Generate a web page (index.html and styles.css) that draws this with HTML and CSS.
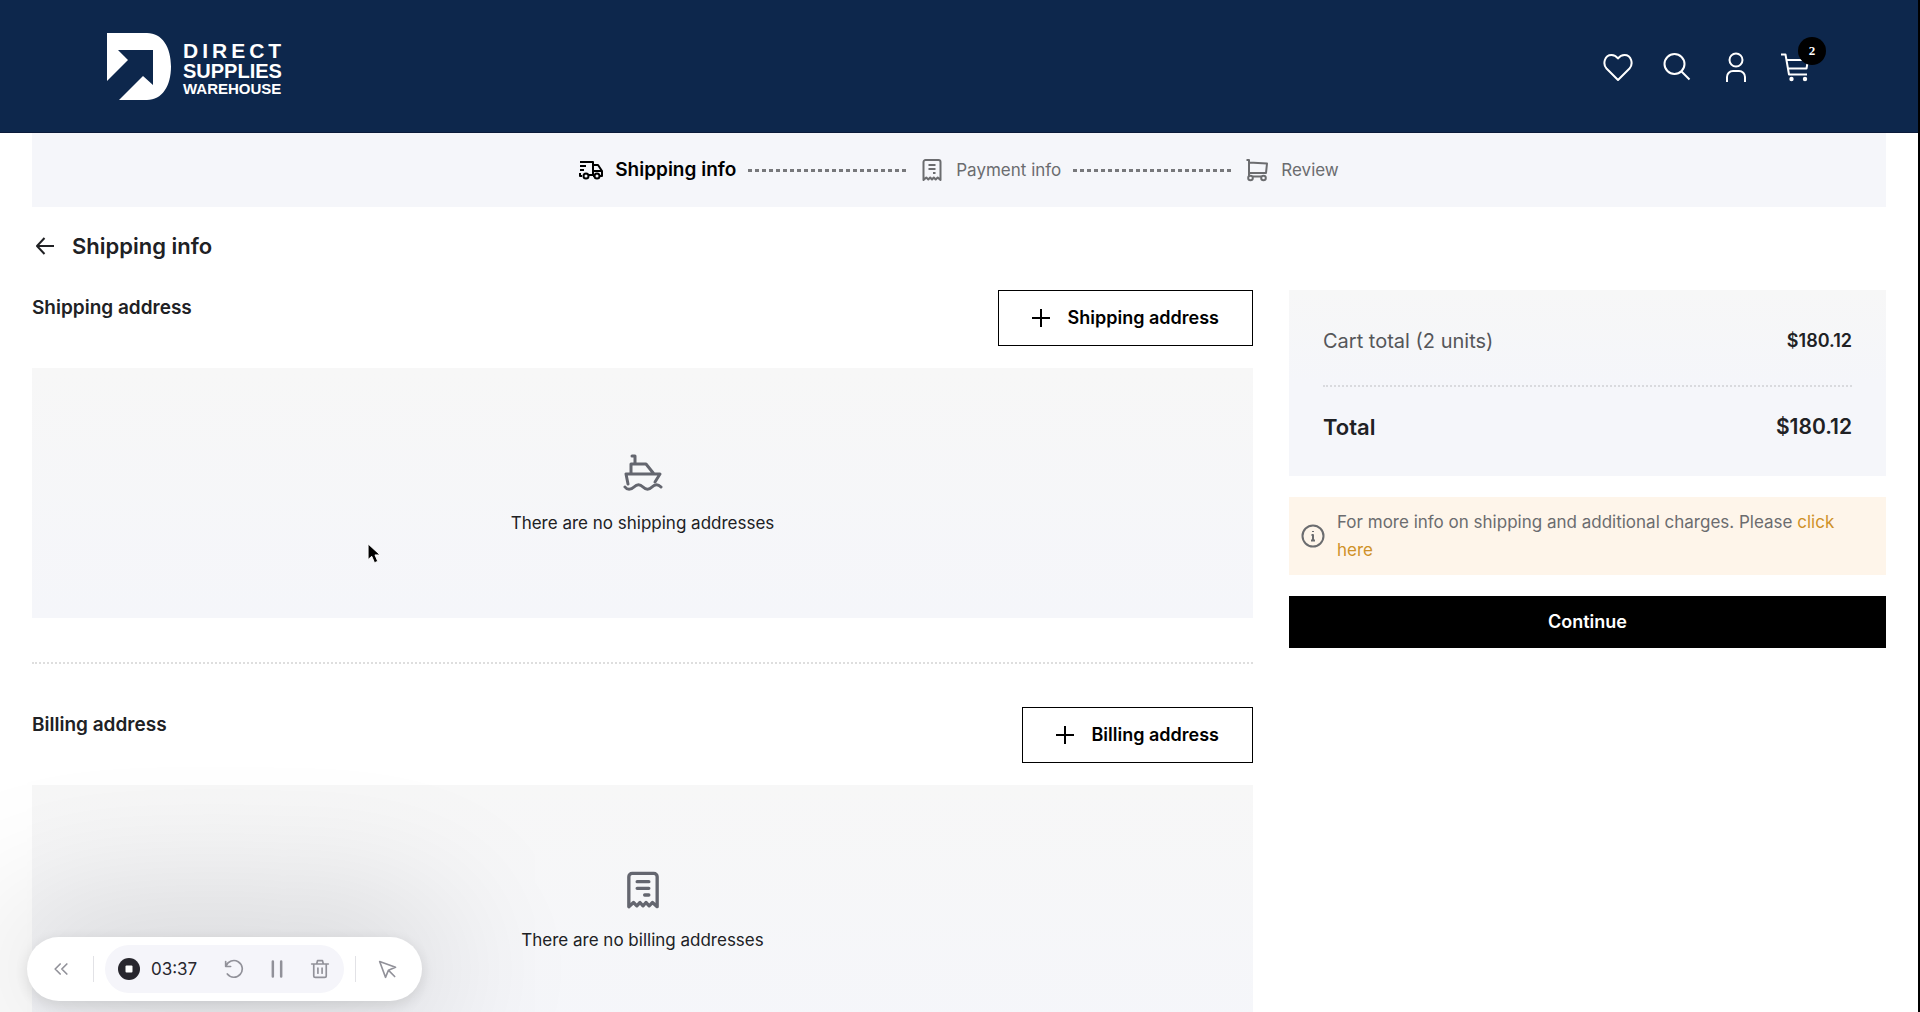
FILE: index.html
```html
<!doctype html>
<html lang="en">
<head>
<meta charset="utf-8">
<meta name="viewport" content="width=device-width, initial-scale=1">
<title>Shipping info - Direct Supplies Warehouse</title>
<link rel="stylesheet" href="styles.css">
</head>
<body>

<!-- shared icons -->
<svg class="sprite" aria-hidden="true">
	<symbol id="receipt" viewBox="0 0 24 24">
		<path d="M3.500 22V4a2 2 0 0 1 2-2h13a2 2 0 0 1 2 2v18l-2.800-2.500-2 2-1.900-2-1.800 2-1.800-2-1.900 2-2-2z"/>
		<path d="M8.500 7h7M8.500 11h7M13 15h2.500"/>
	</symbol>
	<symbol id="plus" viewBox="0 0 20 20">
		<path d="M10 1v18M1 10h18"/>
	</symbol>
</svg>

<header class="header">
	<a href="#" class="logo" aria-label="Direct Supplies Warehouse">
		<svg class="logo-mark" viewBox="0 0 64 67"><path d="M0 0H40C55 0 64 14 64 33.500S55 67 40 67H12L36 43 46 52V17H11L21 27 0 48Z"/></svg>
		<span class="logo-text">
			<span class="logo-direct">DIRECT</span>
			<span class="logo-supplies">SUPPLIES</span>
			<span class="logo-warehouse">WAREHOUSE</span>
		</span>
	</a>
	<nav class="header-nav">
		<a href="#" aria-label="Wishlist"><svg viewBox="0 0 30 30"><path d="M15 28L3.500 16.500C-.5 12 1.500 3 8.500 3c3 0 5 1.500 6.500 3.500C16.500 4.500 18.500 3 21.500 3c7 0 9 9 5 13.500z"/></svg></a>
		<a href="#" aria-label="Search"><svg viewBox="0 0 30 30"><circle cx="12.500" cy="12" r="10"/><path d="M19.500 19.500l8 8"/></svg></a>
		<a href="#" aria-label="Account"><svg viewBox="0 0 30 30"><circle cx="15" cy="8" r="6.500"/><path d="M6 30v-5a6 6 0 0 1 6-6h6a6 6 0 0 1 6 6v5"/></svg></a>
		<a href="#" class="cart" aria-label="Cart"><svg viewBox="0 0 30 30"><path d="M1 2.500h4.500L9 22.500h18M6.500 8H28l-1.500 8.500H8"/><circle class="dot" cx="11.500" cy="27" r="2.200"/><circle class="dot" cx="25" cy="27" r="2.200"/></svg><span class="badge">2</span></a>
	</nav>
</header>

<main class="page">
	<ol class="steps">
		<li class="step active">
			<svg viewBox="0 0 24 24"><path d="M1 4h13v13H10M14 7h5l4 6v5h-2M16 18h-2M14 13h9M1 8h6M1 12h4M1 15v3h2"/><circle cx="7" cy="18" r="2.500"/><circle cx="18" cy="18" r="2.500"/></svg>
			<span>Shipping info</span>
		</li>
		<li class="step-line"></li>
		<li class="step">
			<svg viewBox="0 0 24 24"><use href="#receipt"/></svg>
			<span>Payment info</span>
		</li>
		<li class="step-line"></li>
		<li class="step">
			<svg viewBox="0 0 24 24"><path d="M1.500 2H4v16M4 4.500l18 1-1 9.500H4"/><circle cx="5.500" cy="20" r="2.300"/><circle cx="18.500" cy="20" r="2.300"/><path d="M8 18.500h8"/></svg>
			<span>Review</span>
		</li>
	</ol>

	<div class="title">
		<a href="#" aria-label="Back"><svg viewBox="0 0 20 20"><path d="M19 10H2M9.500 2L2 10l7.500 8"/></svg></a>
		<h1>Shipping info</h1>
	</div>

	<div class="columns">
		<div class="addresses">
			<section>
				<div class="section-head">
					<h2>Shipping address</h2>
					<button type="button" class="btn-outline"><svg><use href="#plus"/></svg>Shipping address</button>
				</div>
				<div class="empty">
					<svg viewBox="0 0 40 40"><path d="M9 3h3v8M8 21V11h15l8 10M5 31L3 21h34l-5 8"/><path d="M2 34c2 3 6 3 9 0s6-3 9 0 6 3 9 0 6-3 9 0"/></svg>
					<p>There are no shipping addresses</p>
				</div>
			</section>
			<hr>
			<section>
				<div class="section-head">
					<h2>Billing address</h2>
					<button type="button" class="btn-outline"><svg><use href="#plus"/></svg>Billing address</button>
				</div>
				<div class="empty">
					<svg viewBox="0 0 24 24" class="thin"><use href="#receipt"/></svg>
					<p>There are no billing addresses</p>
				</div>
			</section>
		</div>

		<aside class="side">
			<dl class="summary">
				<div class="row"><dt>Cart total (2 units)</dt><dd>$180.12</dd></div>
				<div class="row total"><dt>Total</dt><dd>$180.12</dd></div>
			</dl>
			<div class="notice">
				<svg viewBox="0 0 24 24"><circle cx="12" cy="12" r="10.500"/><path d="M10.500 11H12v5.500M10 16.500h4M12 7v1"/></svg>
				<p>For more info on shipping and additional charges. Please <a href="#">click here</a></p>
			</div>
			<button type="button" class="btn-continue">Continue</button>
		</aside>
	</div>
</main>

<!-- recorder bar -->
<div class="recorder">
	<button type="button" aria-label="Collapse"><svg viewBox="0 0 24 24"><path d="M11 6l-6 6 6 6M19 6l-6 6 6 6"/></svg></button>
	<div class="controls">
		<button type="button" class="stop" aria-label="Stop"><svg viewBox="0 0 22 22"><circle cx="11" cy="11" r="11"/><rect x="7.500" y="7.500" width="7" height="7" rx="1"/></svg></button>
		<span class="time">03:37</span>
		<button type="button" aria-label="Restart"><svg viewBox="0 0 24 24"><path d="M2 3v6h6M2.500 8.500A10 10 0 1 1 4 18"/></svg></button>
		<button type="button" aria-label="Pause"><svg viewBox="0 0 24 24" class="bold"><path d="M7 3v18M17 3v18"/></svg></button>
		<button type="button" aria-label="Delete"><svg viewBox="0 0 24 24"><path d="M2 6h20M8 6l1-4h6l1 4M4.500 6v14a2 2 0 0 0 2 2h11a2 2 0 0 0 2-2V6M9.500 11v6M14.500 11v6"/></svg></button>
	</div>
	<button type="button" aria-label="Pointer"><svg viewBox="0 0 24 24"><path d="M2 3l7 19 3.500-8.500L21 10zM13 14l7 7"/></svg></button>
</div>
<svg class="pointer" viewBox="0 0 16 24" aria-hidden="true"><path d="M1 1v17l4-3.500 3 7 3.500-1.500-3-7H14z"/></svg>

</body>
</html>
```

FILE: styles.css
```css
* {padding:0;margin:0;box-sizing:border-box;}
body{
	font-family:Inter,"Liberation Sans",sans-serif;
	font-size:17px;
	line-height:28px;
	color:#202124;
	background:#fff;
	border-right:2px solid #000;
}
a{color:inherit;text-decoration:none;}
button{font:inherit;color:inherit;border:none;background:none;cursor:pointer;}
svg{display:block;fill:none;stroke:currentColor;stroke-width:2;stroke-linejoin:round;flex:none;}
.sprite{position:absolute;width:0;height:0;}

/* header */
.header{
	display:flex;
	align-items:center;
	justify-content:space-between;
	height:133px;
	padding:0 108px 0 107px;
	background:#0d274c;
	border-bottom:1px solid #0a1a3a;
	color:#fff;
}
.logo{display:flex;align-items:center;gap:12px;}
.logo-mark{width:64px;height:67px;fill:#fff;stroke:none;}
.logo-text{
	display:flex;
	flex-direction:column;
	padding-top:6px;
	font-family:"Liberation Sans",Arial,sans-serif;
	font-weight:bold;
	line-height:20px;
}
.logo-direct{font-size:21px;letter-spacing:4px;}
.logo-supplies{font-size:20px;}
.logo-warehouse{font-size:15px;line-height:16px;}
.header-nav{display:flex;gap:29px;padding-top:2px;}
.header-nav svg{width:30px;height:30px;}
.cart{position:relative;}
.cart .dot{fill:#fff;stroke:none;}
.badge{
	position:absolute;
	top:-15px;
	left:18px;
	width:28px;
	height:28px;
	border-radius:50%;
	background:#000;
	font:bold 13px/28px "Liberation Serif",serif;
	text-align:center;
}

/* checkout steps */
.page{padding:0 32px;}
.steps{
	display:flex;
	align-items:center;
	justify-content:center;
	gap:12px;
	height:74px;
	background:#f5f6fa;
	list-style:none;
}
.step{display:flex;align-items:center;gap:12px;color:#6b6c6f;}
.step svg{width:24px;height:24px;}
.step.active{color:#000;font-size:19px;font-weight:600;}
.step-line{
	width:160px;
	height:3px;
	background:repeating-linear-gradient(to right,#77787b 0 4px,transparent 4px 7px);
}

.title{display:flex;align-items:center;gap:16px;padding:25px 2px 30px;}
.title svg{width:22px;height:20px;}
h1{font-size:22px;font-weight:600;line-height:28px;}
h2{font-size:19px;font-weight:600;line-height:36px;}

.columns{display:grid;grid-template-columns:minmax(0,1221fr) minmax(0,597fr);gap:36px;align-items:start;}
.section-head{display:flex;justify-content:space-between;align-items:flex-start;margin-bottom:22px;}
.btn-outline{
	display:flex;
	align-items:center;
	gap:17px;
	height:56px;
	padding:0 33px 0 32px;
	border:1px solid #000;
	color:#000;
	font-size:18px;
	font-weight:600;
}
.btn-outline svg{width:20px;height:20px;}
.empty{
	display:flex;
	flex-direction:column;
	align-items:center;
	justify-content:center;
	gap:16px;
	height:250px;
	padding-top:4px;
	background:linear-gradient(#f7f7f7,#f5f6fa);
}
.empty svg{width:40px;height:40px;color:#64666f;stroke-width:3;stroke-linecap:round;}
.empty svg.thin{stroke-width:2;}
hr{border:none;border-top:2px dotted #dedede;margin:44px 0 43px;}

/* order summary */
.side{display:flex;flex-direction:column;gap:21px;}
.summary{padding:0 34px;background:linear-gradient(#f7f7f7,#f5f6fa 50%);}
.row{display:flex;justify-content:space-between;padding:37px 0 30px;font-size:20px;color:#55565a;}
.row dd{font-size:18px;font-weight:600;color:#202124;}
.row.total{padding:26px 0 35px;border-top:2px dotted #d9dade;color:#202124;font-weight:600;font-size:22px;}
.total dd{font-size:21px;}
.notice{
	display:flex;
	align-items:center;
	gap:12px;
	padding:11px 12px;
	background:#fef5ea;
	color:#6b6c6f;
}
.notice svg{width:24px;height:24px;}
.notice a{color:#cf9127;}
.btn-continue{height:52px;background:#000;color:#fff;font-size:18px;font-weight:600;}

/* recorder bar */
.recorder{
	position:fixed;
	left:27px;
	bottom:11px;
	display:flex;
	align-items:center;
	gap:32px;
	height:64px;
	padding:0 22px;
	border-radius:32px;
	background:#fff;
	box-shadow:0 4px 16px rgba(0,0,0,.12),0 0 150px 30px rgba(0,0,0,.15);
	color:#919199;
}
.recorder button{display:flex;align-items:center;justify-content:center;width:24px;height:24px;}
.recorder svg{width:20px;height:20px;stroke-linecap:round;}
.recorder svg.bold{stroke-width:3;}
.controls{
	position:relative;
	display:flex;
	align-items:center;
	gap:19px;
	height:48px;
	padding:0 12px;
	border-radius:24px;
	background:#f5f5fa;
}
/* dividers either side of the controls */
.controls:before,.controls:after{
	content:"";
	position:absolute;
	top:11px;
	left:-12px;
	width:1px;
	height:26px;
	background:#e2e2e6;
}
.controls:after{left:auto;right:-12px;}
.recorder .stop svg{width:22px;height:22px;fill:#28272e;stroke:none;}
.stop rect{fill:#fff;}
.time{margin:0 6px 0 -9px;color:#28272e;}
.pointer{position:fixed;left:367px;top:543px;width:15px;height:22px;fill:#000;stroke:#fff;stroke-width:1;}
```
